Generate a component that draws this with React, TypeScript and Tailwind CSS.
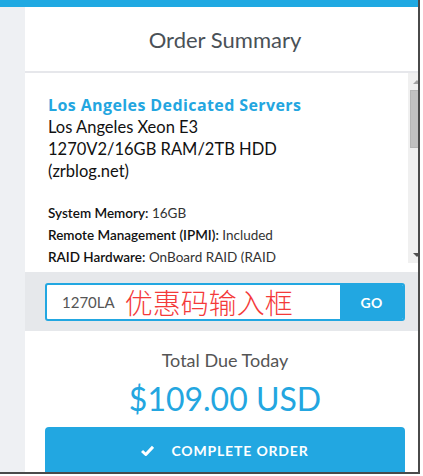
import React from 'react';

const font = { fontFamily: 'Lato, "Open Sans", sans-serif' };

const specs = [
  { label: 'System Memory:', value: '16GB' },
  { label: 'Remote Management (IPMI):', value: 'Included' },
  { label: 'RAID Hardware:', value: 'OnBoard RAID (RAID' },
];

const Scrollbar = () => (
  <div className="w-[17px] shrink-0 bg-[#f0f0f0] flex flex-col items-center">
    <div className="h-[17px] w-full flex items-center justify-center">
      <div className="w-0 h-0 border-l-[4px] border-r-[4px] border-b-[4px] border-l-transparent border-r-transparent border-b-[#a3a3a3]" />
    </div>
    <div className="w-[13px] h-[58px] bg-[#c1c1c1] border border-[#b5b5b5]" />
    <div className="flex-1" />
    <div className="h-[17px] w-full flex items-center justify-center">
      <div className="w-0 h-0 border-l-[4px] border-r-[4px] border-t-[4px] border-l-transparent border-r-transparent border-t-[#505050]" />
    </div>
  </div>
);

export default function App() {
  return (
    <div className="w-[423px] h-[476px] bg-white overflow-hidden" style={font}>
      <div className="w-[420px] h-[474px] border-r-2 border-b-2 border-[#4a4a4a] overflow-hidden flex flex-col">
        {/* top bar */}
        <div className="h-[7px] bg-[#1fa9e2] shrink-0" />
        <div className="flex flex-1 min-h-0">
          <div className="w-[25px] shrink-0 bg-[#eef0f3]" />
          <div className="w-[400px] shrink-0 bg-white flex flex-col overflow-hidden">
            {/* title */}
            <div className="h-[64px] shrink-0 flex items-center justify-center text-[22px] text-[#4a5157] pt-[1px]">
              Order Summary
            </div>
            <div className="h-[2px] shrink-0 bg-[#e6e7eb]" />

            {/* scroll area */}
            <div className="h-[190px] shrink-0 flex">
              <div className="flex-1 overflow-hidden pl-[23px] pt-[21px] pr-3">
                <div
                  className="text-[16px] leading-[22px] font-bold text-[#23a6e0] whitespace-nowrap tracking-[0.4px]"
                  style={{ fontFamily: '"Open Sans", sans-serif' }}
                >
                  Los Angeles Dedicated Servers
                </div>
                <div className="text-[16.5px] leading-[22px] text-[#111]">
                  Los Angeles Xeon E3
                  <br />
                  1270V2/16GB RAM/2TB HDD
                  <br />
                  (zrblog.net)
                </div>
                <div className="mt-[20px] flex flex-col">
                  {specs.map((s) => (
                    <div key={s.label} className="text-[13.5px] leading-[22px] whitespace-nowrap">
                      <span className="font-semibold text-[#111]">{s.label}</span>{' '}
                      <span className="text-[#333]">{s.value}</span>
                    </div>
                  ))}
                </div>
              </div>
              <Scrollbar />
            </div>
            <div className="h-[9px] shrink-0" />

            {/* promo code */}
            <div className="h-[59px] shrink-0 bg-[#e6e8eb] px-[20px] pt-[11px]">
              <div className="h-[38px] flex border-2 border-[#22a7e1] rounded-[3px] overflow-hidden bg-white">
                <div className="flex-1 flex items-center pl-[15px] gap-[10px]">
                  <span className="text-[15px] text-[#555]">1270LA</span>
                  <span
                    className="text-[28px] text-[#f43a3a] leading-none font-light"
                    style={{ fontFamily: '"Noto Sans CJK SC", sans-serif' }}
                  >
                    优惠码输入框
                  </span>
                </div>
                <button className="w-[63px] bg-[#22a7e1] text-white font-bold text-[14px] tracking-wide">
                  GO
                </button>
              </div>
            </div>

            {/* total */}
            <div className="shrink-0 flex flex-col items-center pt-[17px] px-[20px]">
              <div className="text-[18px] leading-[24px] text-[#555]">Total Due Today</div>
              <div className="text-[32px] leading-[40px] text-[#23a6e0] mt-[7px]">$109.00 USD</div>
              <button className="mt-[8px] w-full h-[50px] shrink-0 bg-[#22a7e1] rounded-t-[4px] text-white font-bold text-[14px] tracking-[0.06em] flex items-center justify-center gap-[17px] pb-[3px]">
                <svg width="13" height="11" viewBox="0 0 13 11">
                  <path d="M1 6 L4.8 9.5 L12 1.8" fill="none" stroke="white" strokeWidth="3" strokeLinejoin="round" />
                </svg>
                COMPLETE ORDER
              </button>
            </div>
          </div>
        </div>
      </div>
    </div>
  );
}
